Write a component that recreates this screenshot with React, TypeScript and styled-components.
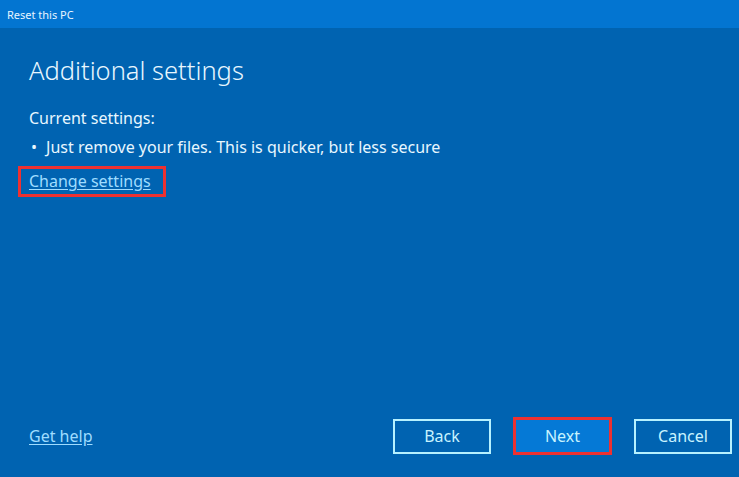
import styled, { createGlobalStyle } from "styled-components";

const GlobalStyle = createGlobalStyle`
  html, body {
    margin: 0;
    padding: 0;
    background: #0063b1;
  }
  body {
    font-family: "Noto Sans", "Open Sans", sans-serif;
  }
`;

const Window = styled.div`
  width: 739px;
  height: 477px;
  display: flex;
  flex-direction: column;
  background: #0063b1;
  color: #ffffff;
  overflow: hidden;
`;

const TitleBar = styled.div`
  height: 28px;
  background: #0375d1;
  display: flex;
  align-items: center;
  padding-left: 7px;
  font-size: 11px;
  color: #e6f4ff;
`;

const Content = styled.div`
  flex: 1;
  display: flex;
  flex-direction: column;
  padding: 26px 29px 0;
`;

const Heading = styled.h1`
  margin: 0 0 18px;
  font-size: 25.5px;
  font-weight: 300;
  line-height: 32px;
  color: #e8f7ff;
`;

const Text = styled.div`
  font-size: 16px;
  line-height: 29px;
  color: #e8f7ff;
`;

const Bullet = styled(Text)`
  display: flex;
  gap: 9px;
  padding-left: 2px;
`;

const Highlight = styled.span`
  align-self: flex-start;
  margin: 4px 0 0 -11px;
  padding: 0 12px 0 8px;
  border: 3px solid #ee3131;
  line-height: 25px;
`;

const Link = styled.a`
  font-size: 16px;
  color: #9fdcff;
  text-decoration: underline;
  text-underline-offset: 2px;
  cursor: pointer;
`;

const Footer = styled.div`
  display: flex;
  align-items: center;
  padding: 0 7px 22px 29px;
`;

const Spacer = styled.div`
  flex: 1;
`;

const Buttons = styled.div`
  display: flex;
  align-items: center;
  gap: 22px;
`;

const Button = styled.button<{ $primary?: boolean }>`
  width: ${(p) => (p.$primary ? "99px" : "98px")};
  height: ${(p) => (p.$primary ? "38px" : "35px")};
  box-sizing: border-box;
  border: ${(p) => (p.$primary ? "3px solid #ee3131" : "2px solid #b6f1ff")};
  background: ${(p) => (p.$primary ? "#0579d6" : "transparent")};
  color: #c8f3ff;
  font-family: inherit;
  font-size: 16px;
  padding: 0;
  cursor: pointer;
`;

export default function App() {
  return (
    <Window>
      <GlobalStyle />
      <TitleBar>Reset this PC</TitleBar>
      <Content>
        <Heading>Additional settings</Heading>
        <Text>Current settings:</Text>
        <Bullet>
          <span>•</span>
          <span>Just remove your files. This is quicker, but less secure</span>
        </Bullet>
        <Highlight>
          <Link>Change settings</Link>
        </Highlight>
      </Content>
      <Footer>
        <Link>Get help</Link>
        <Spacer />
        <Buttons>
          <Button>Back</Button>
          <Button $primary>Next</Button>
          <Button>Cancel</Button>
        </Buttons>
      </Footer>
    </Window>
  );
}
